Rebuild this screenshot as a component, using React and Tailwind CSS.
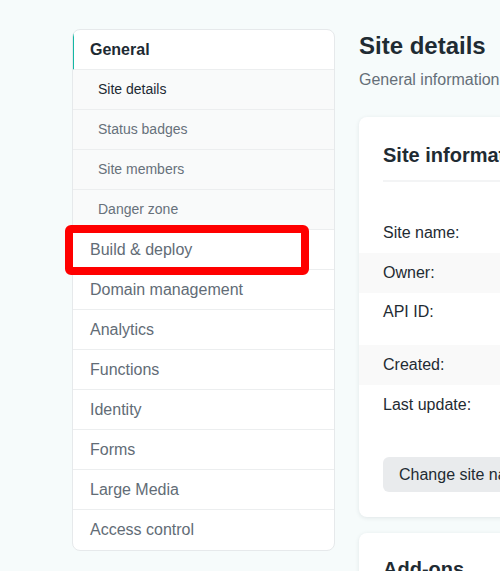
import React from "react";

const subItems = [
  { label: "Site details", active: true },
  { label: "Status badges" },
  { label: "Site members" },
  { label: "Danger zone" },
];

const mainItems = [
  "Build & deploy",
  "Domain management",
  "Analytics",
  "Functions",
  "Identity",
  "Forms",
  "Large Media",
  "Access control",
];

export default function App() {
  return (
    <div
      className="relative w-[500px] h-[571px] overflow-hidden bg-[#f6fbfb] text-[#1f2b33]"
      style={{ fontFamily: '"Liberation Sans", Arial, sans-serif' }}
    >
      <div className="flex items-start pt-[29px] pl-[72px] gap-[24px]">
        {/* Sidebar */}
        <nav className="w-[263px] shrink-0 bg-white border border-[#e6e9eb] rounded-[8px] overflow-hidden">
          <div className="h-[40px] flex items-center pl-[16px] border-l-2 border-[#14b8a6] -ml-px text-[16px] font-bold text-[#1d2a33] border-b border-b-[#eceeef]">
            General
          </div>
          {subItems.map((s) => (
            <div
              key={s.label}
              className={`h-[40px] flex items-center pl-[25px] bg-[#f9fafa] border-b border-[#eceeef] text-[14px] ${
                s.active ? "text-[#1d2a33]" : "text-[#67717b]"
              }`}
            >
              {s.label}
            </div>
          ))}
          {mainItems.map((m, i) => (
            <div
              key={m}
              className={`h-[40px] flex items-center pl-[17px] text-[16px] text-[#626c76] ${
                i < mainItems.length - 1 ? "border-b border-[#eceeef]" : ""
              }`}
            >
              {m}
            </div>
          ))}
        </nav>

        {/* Main */}
        <main className="w-[640px] shrink-0 mt-px">
          <h1 className="text-[24px] leading-[32px] font-bold text-[#1f2b33]">Site details</h1>
          <p className="mt-[6px] text-[16px] leading-[24px] text-[#656f78]">
            General information about your site
          </p>

          <section className="mt-[25px] bg-white rounded-[8px] shadow-[0_1px_4px_rgba(30,50,60,0.10)] pb-[25px]">
            <div className="px-[24px] pt-[24px]">
              <h2 className="text-[20px] leading-[28px] font-bold text-[#1f2b33] pb-[11px] border-b-2 border-[#f3f4f5]">
                Site information
              </h2>
            </div>
            <div className="mt-[31px] text-[16px] text-[#1f2b33]">
              <div className="h-[40px] flex items-center px-[24px]">Site name:</div>
              <div className="h-[40px] flex items-center px-[24px] bg-[#f9f9f9]">Owner:</div>
              <div className="h-[52px] px-[24px] pt-[7px] leading-[24px]">API ID:</div>
              <div className="h-[40px] flex items-center px-[24px] bg-[#f9f9f9]">Created:</div>
              <div className="h-[40px] flex items-center px-[24px]">Last update:</div>
            </div>
            <div className="px-[24px] mt-[32px]">
              <button className="h-[35px] px-[16px] rounded-[6px] bg-[#e9ebed] text-[16px] text-[#1f2b33]">
                Change site name
              </button>
            </div>
          </section>

          <section className="mt-[16px] bg-white rounded-[8px] shadow-[0_1px_4px_rgba(30,50,60,0.10)] h-[200px] px-[24px] pt-[22px]">
            <h2 className="text-[20px] leading-[28px] font-bold text-[#1f2b33]">Add-ons</h2>
          </section>
        </main>
      </div>

      {/* Red highlight overlay */}
      <div className="absolute left-[65px] top-[225px] w-[244px] h-[50px] border-[8px] border-[#ff0000] rounded-[6px] pointer-events-none" />
    </div>
  );
}
